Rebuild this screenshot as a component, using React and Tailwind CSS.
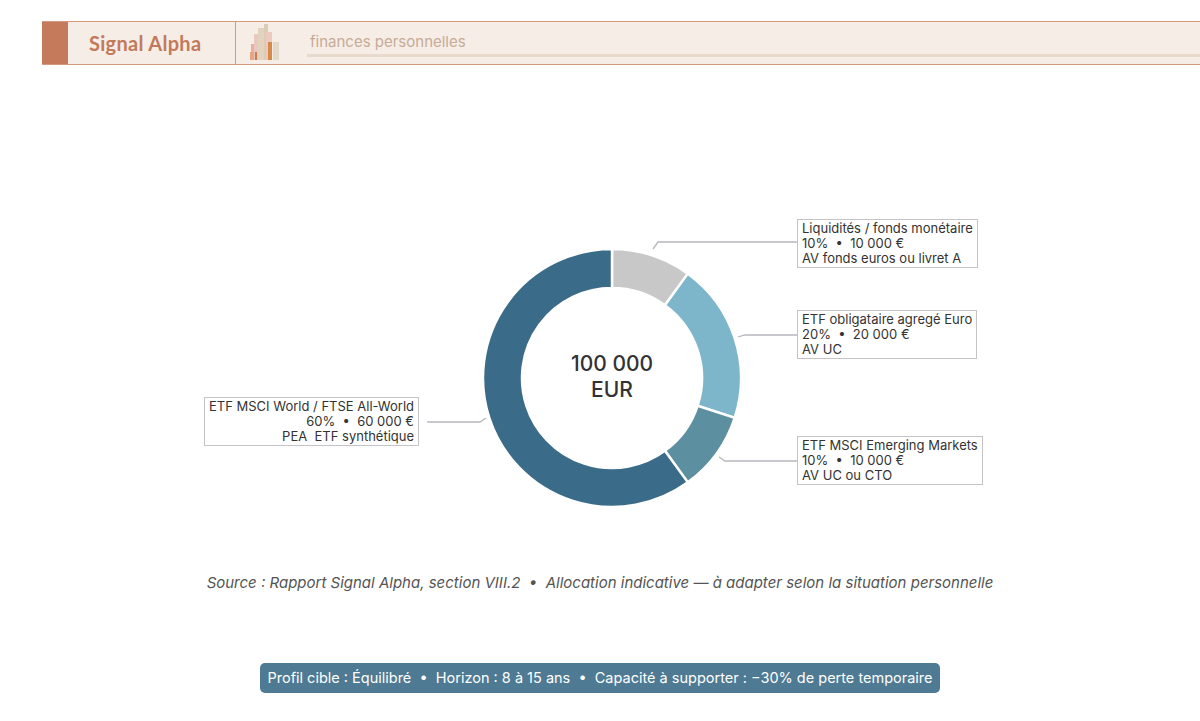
import React from 'react';

const CX = 612, CY = 178, R = 129, RI = 90;
const slices = [
  { v: 10, c: '#c8c8c8' },
  { v: 20, c: '#7db6cb' },
  { v: 10, c: '#5c8fa0' },
  { v: 60, c: '#3a6b89' },
];

const pt = (r, a) => [CX + r * Math.sin(a), CY - r * Math.cos(a)];

function arc(a0, a1) {
  const big = a1 - a0 > Math.PI ? 1 : 0;
  const [x0, y0] = pt(R, a0), [x1, y1] = pt(R, a1);
  const [x2, y2] = pt(RI, a1), [x3, y3] = pt(RI, a0);
  return `M${x0} ${y0} A${R} ${R} 0 ${big} 1 ${x1} ${y1} L${x2} ${y2} A${RI} ${RI} 0 ${big} 0 ${x3} ${y3} Z`;
}

const Label = ({ className, lines }) => (
  <div className={`absolute border border-[#c4c4c8] bg-white px-[4px] py-[1px] text-[13px] leading-[15px] text-[#333] whitespace-pre ${className}`}>
    {lines.map((l, i) => <div key={i}>{l}</div>)}
  </div>
);

export default function App() {
  let acc = 0;
  return (
    <div className="w-[1200px] h-[721px] bg-white font-[Inter,Roboto,sans-serif] pt-[21px]">
      {/* header */}
      <div className="ml-[42px] h-[44px] flex bg-[#f7ede7] border-t border-b border-[#d29a80]">
        <div className="w-[26px] bg-[#c47a5b]" />
        <div className="w-[168px] flex items-center pl-[21px] border-r border-[#d29a80] text-[20px] font-bold text-[#c27a5a] font-[Lato,sans-serif] tracking-[0.3px]">
          Signal Alpha
        </div>
        <svg width="70" height="42" viewBox="0 0 70 42" className="shrink-0">
          <rect x="15" y="22" width="5" height="16" fill="#e8b0a0" />
          <rect x="18" y="12" width="6" height="26" fill="#ecc7bb" />
          <rect x="22" y="6" width="6" height="32" fill="#e2d3bf" />
          <rect x="28" y="2" width="4" height="36" fill="#dccbb5" />
          <rect x="30" y="10" width="6" height="28" fill="#eccac0" />
          <rect x="32" y="20" width="4" height="18" fill="#d58b45" />
          <rect x="19" y="30" width="2" height="8" fill="#cc7a50" />
          <rect x="37" y="20" width="6" height="18" fill="#e4d8c8" />
          <rect x="14" y="30" width="4" height="8" fill="#e2a886" />
        </svg>
        <div className="flex-1 flex flex-col justify-center pl-[1px]">
          <div className="pl-[3px] text-[15px] text-[#c6ab96] leading-[18px] mt-[3px]">finances personnelles</div>
          <div className="h-[3px] bg-[#e8dacd] mt-[3px]" />
        </div>
      </div>

      {/* chart */}
      <div className="relative h-[320px] mt-[135px]">
        <svg width="1200" height="320" className="absolute inset-0">
          {slices.map((s, i) => {
            const a0 = (acc / 100) * 2 * Math.PI;
            acc += s.v;
            const a1 = (acc / 100) * 2 * Math.PI;
            return <path key={i} d={arc(a0, a1)} fill={s.c} stroke="#fff" strokeWidth="2.5" />;
          })}
          <g fill="none" stroke="#b5b8c0" strokeWidth="1.3">
            <polyline points="653,49 658,42 797,42" />
            <polyline points="738,137 745,135 797,135" />
            <polyline points="719,257 725,261 797,261" />
            <polyline points="427,222 480,222 486,218" />
          </g>
          <text x={CX} y={171} textAnchor="middle" fontSize="21" fontWeight="500" fill="#333" fontFamily="Inter, Roboto, sans-serif">100 000</text>
          <text x={CX} y={197} textAnchor="middle" fontSize="21" fontWeight="500" fill="#333" fontFamily="Inter, Roboto, sans-serif">EUR</text>
        </svg>
        <Label className="left-[797px] top-[19px]" lines={['Liquidités / fonds monétaire', '10%  •  10 000 €', 'AV fonds euros ou livret A']} />
        <Label className="left-[797px] top-[110px]" lines={['ETF obligataire agregé Euro', '20%  •  20 000 €', 'AV UC']} />
        <Label className="left-[797px] top-[236px]" lines={['ETF MSCI Emerging Markets', '10%  •  10 000 €', 'AV UC ou CTO']} />
        <Label className="left-[204px] top-[197px] text-right" lines={['ETF MSCI World / FTSE All-World', '60%  •  60 000 €', 'PEA  ETF synthétique']} />
      </div>

      <p className="mt-[52px] text-center italic text-[15px] text-[#555] whitespace-pre">
        {'Source : Rapport Signal Alpha, section VIII.2  •  Allocation indicative — à adapter selon la situation personnelle'}
      </p>

      <div className="flex justify-center mt-[68px]">
        <div className="bg-[#4e7a94] text-white text-[14.5px] rounded-[5px] px-[7px] h-[30px] flex items-center whitespace-pre">
          {'Profil cible : Équilibré  •  Horizon : 8 à 15 ans  •  Capacité à supporter : −30% de perte temporaire'}
        </div>
      </div>
    </div>
  );
}
